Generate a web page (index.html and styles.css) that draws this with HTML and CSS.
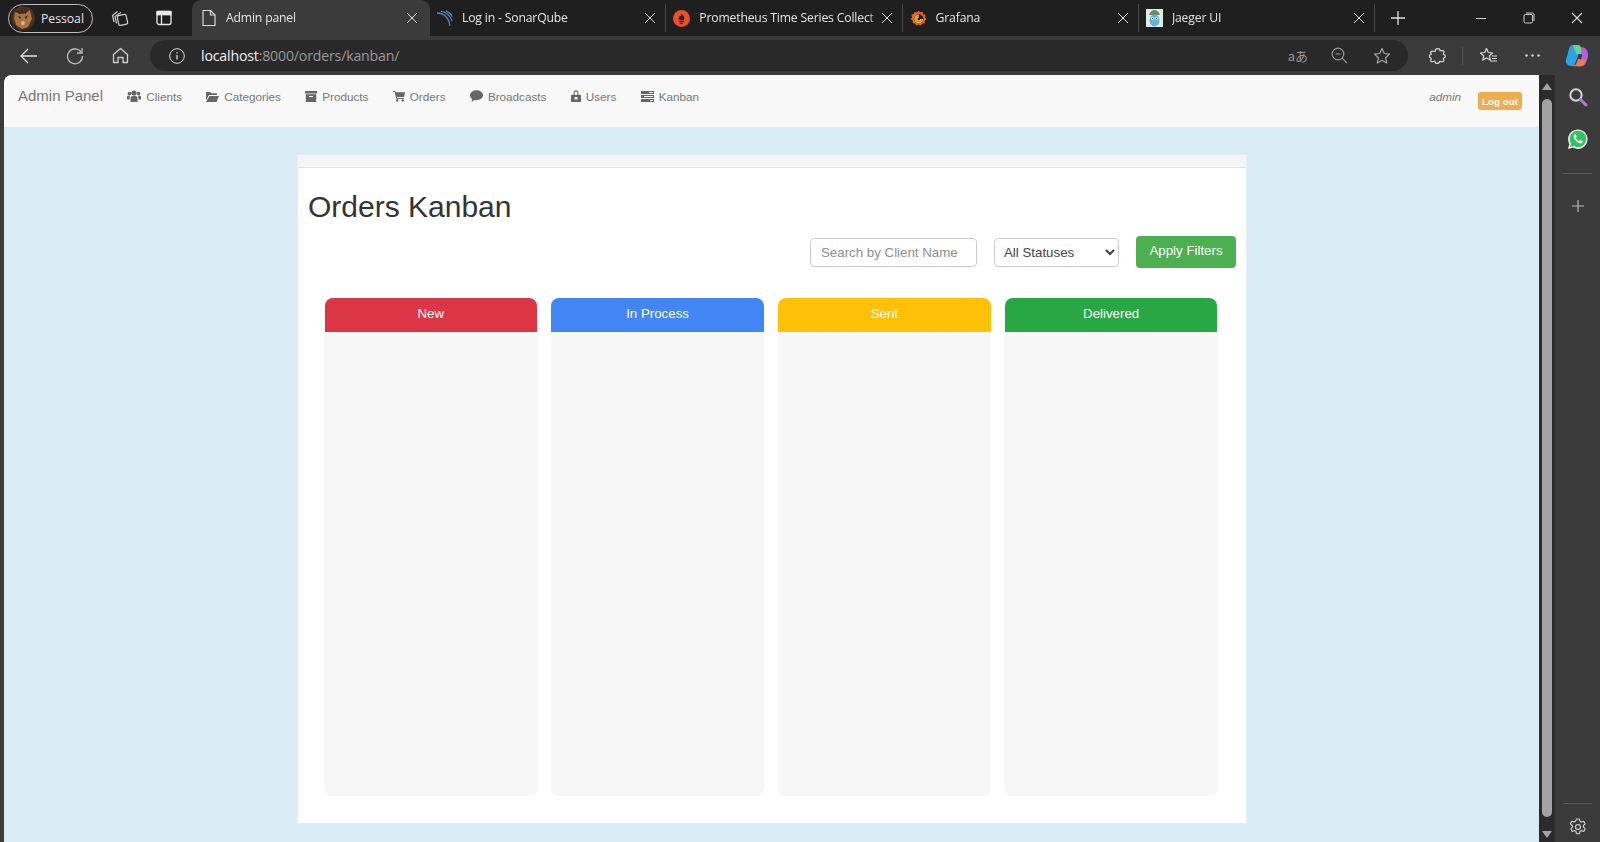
FILE: index.html
```html
<!DOCTYPE html>
<html lang="en">
<head>
  <meta charset="UTF-8">
  <title>Admin panel</title>
  <link rel="stylesheet" href="styles.css">
</head>
<body>
  <!-- Browser tab strip -->
  <div class="tabstrip">
    <div class="profile">
      <svg class="avatar" width="24" height="24" viewBox="0 0 24 24"><circle cx="12" cy="12" r="12" fill="#4a2f22"/><path d="M4 6l5 2 6-1 4-3 2 9-4 8-6 2-6-4-2-7z" fill="#a8743f"/><path d="M7 10l3 1-1 2zM17 9l-3 2 1 2z" fill="#2a1a10"/><path d="M10 16l2-1 2 1-1 3h-2z" fill="#d8b896"/><path d="M11 4l1 4M15 5l-1 3M7 5l2 3" stroke="#3a2416" stroke-width="1"/></svg>
      <span>Pessoal</span>
    </div>
    <svg class="strip-icon icon-collections" width="18" height="18" viewBox="0 0 18 18" fill="none" stroke="#cfcfcf" stroke-width="1.2"><path d="M3 13l-1.500-6.500 5-4"/><path d="M5.500 14.500l-1.500-7 6-4"/><rect x="7" y="6" width="9" height="10" rx="1.500" transform="rotate(-12 11 11)"/></svg>
    <svg class="strip-icon icon-vertical" width="16" height="16" viewBox="0 0 16 16" fill="none" stroke="#e8e8e8" stroke-width="1.300"><rect x="1" y="1.500" width="14" height="13" rx="2"/><path d="M1 4.500h14M5.500 4.500v10" /><rect x="1" y="1.500" width="14" height="3" fill="#e8e8e8"/></svg>

    <div class="tab tab-active">
      <svg class="favicon" width="16" height="18" viewBox="0 0 16 18" fill="none" stroke="#d8d8d8" stroke-width="1.200"><path d="M2 1.500h7.500l4.500 4.500v10.500H2z" stroke-linejoin="round"/><path d="M9.500 1.500V6H14"/></svg>
      <span class="tab-title">Admin panel</span>
      <span class="tab-close"></span>
    </div>
    <div class="tab">
      <svg class="favicon" width="16" height="16" viewBox="0 0 16 16" fill="none" stroke="#4a90c8" stroke-width="1.300"><path d="M0 3c7 0 12 5 13 13"/><path d="M4 1.200c5 .8 10 5 11.200 10"/><path d="M9 .8c2.500 1 5 3.200 6.300 5.700"/></svg>
      <span class="tab-title">Log in - SonarQube</span>
      <span class="tab-close"></span>
    </div>
    <div class="tab">
      <svg class="favicon" width="17" height="17" viewBox="0 0 17 17"><circle cx="8.500" cy="8.500" r="8.500" fill="#e6522c"/><path d="M8.500 3c.4 1.600 2.800 2.800 2.800 5.400 0 .8-.3 1.400-.6 1.800H6.300c-.3-.4-.6-1-.6-1.800 0-1.400 1-2 1.500-3 .3.500.5.800.7 1 .4-1 .6-2.200.6-3.400z" fill="#3a1810"/><path d="M5.800 11h5.400v1H5.800zM6.600 12.800h3.800c0 .9-.8 1.400-1.900 1.400s-1.900-.5-1.900-1.400z" fill="#3a1810"/></svg>
      <span class="tab-title">Prometheus Time Series Collect</span>
      <span class="tab-close"></span>
    </div>
    <div class="tab">
      <svg class="favicon" width="17" height="17" viewBox="0 0 17 17" fill="none"><path d="M8.500 .5l1.600 2 2.400-.7.600 2.400 2.400.8-.7 2.400 1.700 1.800-2 1.500.1 2.500-2.500.2-1.300 2.200-2.200-1-2.300 1-1.200-2.200-2.500-.3.200-2.500L.5 9.100 2.200 7.200 1.500 4.800l2.400-.8.700-2.300 2.300.7z" fill="#ee6a24"/><circle cx="8.800" cy="9" r="4.700" fill="#1f1f1f"/><path d="M12.500 9a3.700 3.700 0 1 1-3.700-3.700M10.800 9a2 2 0 1 1-2-2" stroke="#fbb034" stroke-width="1.500"/></svg>
      <span class="tab-title">Grafana</span>
      <span class="tab-close"></span>
    </div>
    <div class="tab">
      <svg class="favicon" width="17" height="18" viewBox="0 0 17 18"><rect width="17" height="18" fill="#dfeee9"/><path d="M3 6c1-3 3-5 5.500-5S13 3 14 6z" fill="#6f8a63"/><ellipse cx="8.500" cy="11.500" rx="5" ry="6" fill="#5fb3d3"/><circle cx="6.500" cy="9.500" r="1.300" fill="#fff"/><circle cx="10.500" cy="9.500" r="1.300" fill="#fff"/><circle cx="6.500" cy="9.500" r=".6" fill="#222"/><circle cx="10.500" cy="9.500" r=".6" fill="#222"/></svg>
      <span class="tab-title">Jaeger UI</span>
      <span class="tab-close"></span>
    </div>
    <svg class="strip-icon icon-new" width="16" height="16" viewBox="0 0 16 16" stroke="#e0e0e0" stroke-width="1.300"><path d="M8 1v14M1 8h14"/></svg>

    <div class="window-controls">
      <svg width="12" height="12" viewBox="0 0 12 12" stroke="#cfcfcf"><path d="M1 6.500h10"/></svg>
      <svg width="12" height="12" viewBox="0 0 12 12" fill="none" stroke="#cfcfcf"><rect x="1" y="2.500" width="8.500" height="8.500" rx="1.500"/><path d="M3 1h6.500A1.500 1.500 0 0 1 11 2.500V9"/></svg>
      <svg width="12" height="12" viewBox="0 0 12 12" stroke="#d8d8d8" stroke-width="1.100"><path d="M1 1l10 10M11 1L1 11"/></svg>
    </div>
  </div>

  <!-- Browser toolbar -->
  <div class="toolbar">
    <svg class="tool tool-back" width="18" height="16" viewBox="0 0 18 16" fill="none" stroke="#e4e4e4" stroke-width="1.300"><path d="M1 8h16M8 1L1 8l7 7"/></svg>
    <svg class="tool tool-reload" width="18" height="18" viewBox="0 0 18 18" fill="none" stroke="#bdbdbd" stroke-width="1.300"><path d="M15.500 5.500A7.500 7.500 0 1 0 16.500 9"/><path d="M16 1v5h-5"/></svg>
    <svg class="tool tool-home" width="17" height="17" viewBox="0 0 17 17" fill="none" stroke="#cfcfcf" stroke-width="1.300"><path d="M1.500 7.500l7-6 7 6v8h-4.500v-5h-5v5H1.500z" stroke-linejoin="round"/></svg>
    <div class="addressbar">
      <svg class="info-icon" width="16" height="16" viewBox="0 0 16 16" fill="none" stroke="#dcdcdc"><circle cx="8" cy="8" r="7.300"/><path d="M8 7v4.500M8 4.200v1.300" stroke-width="1.300"/></svg>
      <span class="url"><span class="url-host">localhost</span>:8000/orders/kanban/</span>
      <div class="address-actions">
        <span class="translate-icon">aあ</span>
        <svg width="17" height="17" viewBox="0 0 17 17" fill="none" stroke="#9a9a9a" stroke-width="1.200"><circle cx="7" cy="7" r="5.800"/><path d="M11.200 11.200L16 16M4.500 7h5"/></svg>
        <svg width="18" height="18" viewBox="0 0 18 18" fill="none" stroke="#a8a8a8" stroke-width="1.200"><path d="M9 1.500l2.300 5 5.200.6-3.900 3.600 1.100 5.300L9 13.300 4.300 16l1.100-5.300L1.500 7.100l5.200-.6z" stroke-linejoin="round"/></svg>
      </div>
    </div>
    <svg class="tool tool-ext" width="18" height="18" viewBox="0 0 18 18" fill="none" stroke="#dcdcdc" stroke-width="1.200"><path d="M6.500 3.500C6.500 1 11 1 11 3.500c0 .5 3.800-.5 4 1 .2 1-1 2.500-.5 3 2.500 0 2.500 3.500 0 3.500-.5 0 .8 2.800 0 3.500-1 .8-3.500-.5-4 0 0 2.500-4.500 2.500-4.500 0 0-.5-3 .8-4 0-.8-.7.5-3 0-3.500-2.300 0-2.300-3.500 0-3.500.5-.5-.8-2.300 0-3 1-.8 4 0 4 0z" stroke-linejoin="round"/></svg>
    <span class="tool-divider"></span>
    <svg class="tool tool-fav" width="19" height="17" viewBox="0 0 19 17" fill="none" stroke="#dcdcdc" stroke-width="1.200"><path d="M7.500 1.500l1.800 4 4.200.5-3.100 2.900.9 4.200-3.800-2.200-3.700 2.200.9-4.200L1.500 6l4.200-.5z" stroke-linejoin="round"/><path d="M13 9h5M13 11.500h5M11 14h7"/></svg>
    <svg class="tool tool-more" width="15" height="3" viewBox="0 0 15 3" fill="#dcdcdc"><circle cx="1.500" cy="1.500" r="1.200"/><circle cx="7.500" cy="1.500" r="1.200"/><circle cx="13.500" cy="1.500" r="1.200"/></svg>
    <svg class="tool tool-copilot" width="24" height="24" viewBox="0 0 24 24"><path d="M8 1h5c1 0 2 .8 2.300 1.800L13 12 9 22H6c-3.500 0-5.800-3-5-6.500L4 5c.6-2.500 2-4 4-4z" fill="#2aa3e6"/><path d="M8 1h5c1.500 0 2.500 1 3 2.500L18 10h-7z" fill="#6ad28a"/><path d="M16 3c4 0 7 3 7 7.500 0 3-1 5.500-2 8-1 2.500-2.500 3.500-5 3.500H11c2 0 3-1 4-4l2-6z" fill="#b85ce0"/><path d="M6 22c3 0 5-1 6-4l1-3 8 1-1.500 3.500C18.500 21.500 17 22.500 15 22.500z" fill="#f0785a"/></svg>
  </div>

  <div class="viewport">
    <div class="page">
      <!-- Admin navbar -->
      <nav class="navbar">
        <a class="brand">Admin Panel</a>
        <ul class="nav-links">
          <li><svg width="14" height="12" viewBox="0 0 14 12" fill="#666"><circle cx="7" cy="3" r="2.600"/><circle cx="2.500" cy="3.500" r="1.800"/><circle cx="11.500" cy="3.500" r="1.800"/><path d="M3.500 7.500C3.500 6.500 5 6 7 6s3.500.5 3.500 1.500V12h-7zM0 6.500C0 6 1 5.500 2.800 5.500l-.3 4H0zM14 6.500c0-.5-1-1-2.800-1l.3 4H14z"/></svg>Clients</li>
          <li><svg width="13" height="11" viewBox="0 0 13 11" fill="#666"><path d="M0 1h4.500l1 1.200H11v1.800H3L0 9.500z"/><path d="M3.500 5H13l-2.500 6H0z"/></svg>Categories</li>
          <li><svg width="12" height="11" viewBox="0 0 12 11" fill="#666"><path d="M0 0h12v2.500H0zM.8 3.300h10.400V11H.8z"/><path d="M4 5h4v1H4z" fill="#f8f8f8"/></svg>Products</li>
          <li><svg width="12" height="12" viewBox="0 0 12 12" fill="#666"><path d="M0 1h2.200l.5 1.200H12l-.8 4.800H4l.2 1h6.600v1H3.400L1.600 2H0z"/><circle cx="4.200" cy="10.500" r="1.200"/><circle cx="9.800" cy="10.500" r="1.200"/></svg>Orders</li>
          <li><svg width="13" height="12" viewBox="0 0 13 12" fill="#666"><ellipse cx="6.500" cy="5.200" rx="6.500" ry="5"/><path d="M2.500 8L1.500 12l4.500-3z"/></svg>Broadcasts</li>
          <li><svg width="10" height="12" viewBox="0 0 10 12" fill="#666"><path d="M2.500 5V2.800a2.500 2.500 0 0 1 5 0V5H6.500V3a1.500 1.500 0 0 0-3 0v2z"/><rect y="4.800" width="10" height="7.200" rx=".8"/><rect x="3.500" y="7" width="3" height="2.500" fill="#f8f8f8"/></svg>Users</li>
          <li><svg width="13" height="11" viewBox="0 0 13 11" fill="#666"><path d="M0 0h13v3H0zM0 4h13v3H0zM0 8h13v3H0z"/><path d="M8 1h4v1H8zM3 5h9v1H3zM9 9h3v1H9z" fill="#f8f8f8"/></svg>Kanban</li>
        </ul>
        <div class="nav-user">
          <span class="username">admin</span>
          <button class="logout">Log out</button>
        </div>
      </nav>

      <!-- Kanban card -->
      <section class="panel">
        <div class="panel-heading"></div>
        <div class="panel-body">
          <h1>Orders Kanban</h1>
          <form class="filters">
            <input type="text" class="filter-input" placeholder="Search by Client Name">
            <select class="filter-select">
              <option>All Statuses</option>
              <option>New</option>
              <option>In Process</option>
              <option>Sent</option>
              <option>Delivered</option>
            </select>
            <button type="button" class="filter-button">Apply Filters</button>
          </form>
          <div class="board">
            <div class="column"><div class="column-head head-new">New</div></div>
            <div class="column"><div class="column-head head-process">In Process</div></div>
            <div class="column"><div class="column-head head-sent">Sent</div></div>
            <div class="column"><div class="column-head head-delivered">Delivered</div></div>
          </div>
        </div>
      </section>
    </div>

    <!-- Page scrollbar -->
    <div class="scrollbar">
      <span class="arrow-up"></span>
      <span class="thumb"></span>
      <span class="arrow-down"></span>
    </div>

    <!-- Browser sidebar -->
    <aside class="sidebar">
      <svg width="20" height="20" viewBox="0 0 20 20" fill="none"><circle cx="8" cy="8" r="5.700" stroke="#d5d5d5" stroke-width="2"/><path d="M12.500 12.500L18 18" stroke="#a67bd8" stroke-width="3" stroke-linecap="round"/></svg>
      <svg class="side-whatsapp" width="20" height="20" viewBox="0 0 20 20"><path d="M0 20l1.400-5A9.700 9.700 0 1 1 5 18.600z" fill="#fff"/><path d="M2 18l1-3.500a8.300 8.300 0 1 1 2.600 2.500z" fill="#2ec35b"/><path d="M7 5.200c-.8.300-1.500 1.200-1.300 2.600.4 2.800 3.600 6 6.500 6.500 1.400.2 2.300-.6 2.500-1.400.1-.5-.1-.8-.4-1l-1.700-.8c-.3-.1-.5 0-.7.200l-.6.800c-1.500-.5-2.900-1.900-3.500-3.400l.7-.7c.2-.2.200-.4.100-.7L7.900 5.600c-.2-.4-.5-.5-.9-.4z" fill="#fff"/></svg>
      <span class="side-divider"></span>
      <svg width="14" height="14" viewBox="0 0 14 14" stroke="#b8b8b8" stroke-width="1.200"><path d="M7 1v12M1 7h12"/></svg>
      <span class="side-spacer"></span>
      <span class="side-divider side-divider-low"></span>
      <svg width="18" height="18" viewBox="0 0 18 18" fill="none" stroke="#d5d5d5" stroke-width="1.100"><path d="M7.500 1h3l.5 2.300 1.500.8 2.200-.8 1.500 2.600-1.700 1.600v1.700l1.700 1.600-1.500 2.600-2.200-.8-1.500.8-.5 2.300h-3l-.5-2.300-1.500-.8-2.200.8-1.500-2.600 1.700-1.600V7.700L1.300 5.900l1.500-2.600 2.200.8 1.500-.8z" stroke-linejoin="round"/><circle cx="9" cy="9" r="2.500"/></svg>
    </aside>
  </div>
</body>
</html>
```

FILE: styles.css
```css
/* Base Styles */
html, body {
  height: 842px;
  margin: 0;
  overflow: hidden;
}
body {
  display: flex;
  flex-direction: column;
  background-color: #3b3b3b;
  font-family: "Liberation Sans", Arial, sans-serif;
}

/* Tab strip */
.tabstrip {
  display: flex;
  align-items: center;
  height: 36px;
  padding-left: 8px;
  background-color: #1f1f1f;
  color: #e6e6e6;
  font-family: "Open Sans", "Noto Sans", sans-serif;
  font-size: 12.2px;
}
.profile {
  display: flex;
  align-items: center;
  gap: 6px;
  box-sizing: border-box;
  width: 85px;
  height: 29px;
  padding-left: 2px;
  border: 1px solid #bdbdbd;
  border-radius: 15px;
}
.strip-icon { flex: none; }
.icon-collections { margin-left: 18px; }
.icon-vertical { margin-left: 27px; margin-right: 20px; }
.tab {
  display: flex;
  align-items: center;
  box-sizing: border-box;
  width: 236.300px;
  height: 28px;
  padding: 0 8px 0 7px;
  border-right: 1px solid #4a4a4a;
}
.tab-active {
  align-self: flex-end;
  width: 238px;
  height: 36px;
  padding-left: 9px;
  padding-right: 11px;
  border-right: none;
  border-radius: 9px 9px 0 0;
  background-color: #3b3b3b;
}
.favicon {
  flex: none;
  margin-right: 9px;
}
.tab-title {
  flex: 1;
  min-width: 0;
  margin-top: -2px;
  overflow: hidden;
  letter-spacing: -0.17px;
  white-space: nowrap;
  -webkit-mask-image: linear-gradient(to left, transparent 0, #000 12px);
  mask-image: linear-gradient(to left, transparent 0, #000 12px);
}
.tab-close {
  position: relative;
  flex: none;
  width: 10px;
  height: 10px;
  margin-left: 2px;
  margin-right: 2px;
  background:
    linear-gradient(45deg, transparent 46%, #dedede 46%, #dedede 54%, transparent 54%),
    linear-gradient(-45deg, transparent 46%, #dedede 46%, #dedede 54%, transparent 54%);
}
.icon-new { margin-left: 15px; }
.window-controls {
  display: flex;
  gap: 36px;
  align-items: center;
  margin-left: auto;
  padding-right: 17px;
}

/* Toolbar */
.toolbar {
  display: flex;
  align-items: center;
  height: 39px;
  background-color: #3b3b3b;
}
.tool { flex: none; }
.tool-back { margin-left: 20px; }
.tool-reload { margin-left: 28px; }
.tool-home { margin-left: 28px; }
.addressbar {
  display: flex;
  align-items: center;
  box-sizing: border-box;
  width: 1258px;
  height: 31px;
  margin-left: 21px;
  padding: 0 17px 0 19px;
  border-radius: 16px;
  background-color: #292929;
}
.info-icon { flex: none; margin-right: 16px; }
.url {
  margin-top: -1px;
  color: #9a9a9a;
  font-family: "Open Sans", "Noto Sans", sans-serif;
  font-size: 14.2px;
  letter-spacing: -0.2px;
}
.url-host { color: #f2f2f2; }
.address-actions {
  display: flex;
  align-items: center;
  gap: 25px;
  margin-left: auto;
}
.translate-icon {
  margin-right: -2px;
  color: #9a9a9a;
  font-family: "Noto Sans CJK JP", sans-serif;
  font-size: 13px;
}
.tool-ext { margin-left: 21px; }
.tool-divider {
  flex: none;
  width: 1px;
  height: 18px;
  margin-left: 15px;
  background-color: #555;
}
.tool-fav { margin-left: 16px; }
.tool-more { margin-left: 27px; }
.tool-copilot { margin-left: 25px; }

/* Page area */
.viewport {
  display: flex;
  flex: 1;
  min-height: 0;
  padding-left: 4px;
}
.page {
  flex: none;
  width: 1535px;
  border-top-left-radius: 8px;
  background-color: #d9ecf5;
  overflow: hidden;
}

/* Admin navbar */
.navbar {
  display: flex;
  align-items: flex-start;
  height: 52px;
  background-color: #f8f8f8;
  color: #777;
  font-size: 11.7px;
}
.brand {
  padding: 12px 12px 0 14px;
  font-size: 15px;
  line-height: 18px;
}
.nav-links {
  display: flex;
  margin: 0;
  padding: 0;
  list-style: none;
}
.nav-links li {
  display: flex;
  align-items: center;
  gap: 5px;
  height: 18px;
  padding: 12px 12.200px 0;
}
.nav-user {
  display: flex;
  align-items: flex-start;
  margin-left: auto;
  padding-right: 17px;
}
.username {
  margin-top: 15px;
  font-style: italic;
}
.logout {
  height: 18px;
  margin: 17px 0 0 17px;
  padding: 0 4px;
  border: none;
  border-radius: 3px;
  background-color: #f0ad4e;
  color: #fff;
  font-family: inherit;
  font-size: 9.8px;
  font-weight: bold;
}

/* Kanban card */
.panel {
  box-sizing: border-box;
  width: 950px;
  height: 670px;
  margin: 27px 0 0 293px;
  border: 1px solid #e6eef2;
  background-color: #fff;
}
.panel-heading {
  height: 12px;
  border-bottom: 1px solid #e2e2e2;
  background-color: #f5f5f5;
}
.panel-body {
  padding: 0 10px;
}
h1 {
  margin: 21px 0 0;
  color: #333;
  font-size: 30px;
  font-weight: 400;
  line-height: 36px;
}
.filters {
  display: flex;
  justify-content: flex-end;
  align-items: center;
  gap: 17px;
  height: 32px;
  margin-top: 11px;
}
.filter-input {
  box-sizing: border-box;
  width: 167px;
  height: 29px;
  padding: 0 10px;
  border: 1px solid #ccc;
  border-radius: 4px;
  font-family: inherit;
  font-size: 13.3px;
}
.filter-input::placeholder { color: #8e8e8e; }
.filter-select {
  box-sizing: border-box;
  width: 125px;
  height: 29px;
  padding: 1px 5px 0;
  border: 1px solid #ccc;
  border-radius: 4px;
  background-color: #fff;
  color: #444;
  font-family: inherit;
  font-size: 13.3px;
}
.filter-button {
  width: 100px;
  height: 32px;
  padding: 0 0 3px;
  border: none;
  border-radius: 4px;
  background-color: #4caf50;
  color: #fff;
  font-family: inherit;
  font-size: 13.3px;
}

/* Board */
.board {
  display: grid;
  grid-template-columns: repeat(4, 213.500px);
  gap: 13.300px;
  margin: 30px 16px 0;
}
.column {
  height: 498px;
  border-radius: 8px;
  background-color: #f7f7f7;
}
.column-head {
  height: 34px;
  margin: 0 0.5px;
  border-radius: 8px 8px 0 0;
  color: #fff;
  font-size: 13.3px;
  line-height: 31px;
  text-align: center;
}
.head-new { background-color: #dc3545; }
.head-process { background-color: #4285f4; }
.head-sent { background-color: #ffc107; }
.head-delivered { background-color: #28a745; }

/* Scrollbar */
.scrollbar {
  position: relative;
  flex: none;
  width: 16px;
  background-color: #2b2b2b;
}
.thumb {
  position: absolute;
  top: 24px;
  left: 3px;
  width: 10px;
  height: 718px;
  border-radius: 5px;
  background-color: #a3a3a3;
}
.arrow-up, .arrow-down {
  position: absolute;
  left: 3px;
  width: 0;
  height: 0;
  border-left: 5px solid transparent;
  border-right: 5px solid transparent;
}
.arrow-up {
  top: 8px;
  border-bottom: 7px solid #a3a3a3;
}
.arrow-down {
  bottom: 4px;
  border-top: 7px solid #a3a3a3;
}

/* Sidebar */
.sidebar {
  display: flex;
  flex: 1;
  flex-direction: column;
  align-items: center;
  padding: 12px 0 6px;
}
.side-whatsapp { margin-top: 22px; }
.side-divider {
  flex: none;
  width: 29px;
  height: 1px;
  margin: 24px 0 25px;
  background-color: #5a5a5a;
}
.side-divider-low { margin: 0 0 14px; }
.side-spacer { flex: 1; }
```
